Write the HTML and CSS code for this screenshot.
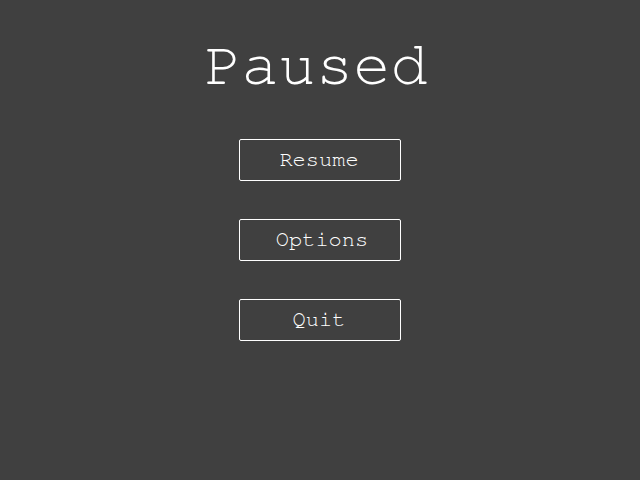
FILE: index.html
```html
<!DOCTYPE html>
<html>
<head>
<meta charset="utf-8">
<link rel="stylesheet" href="styles.css">
</head>
<body>
<main class="pause">
  <h1 class="title">Paused</h1>
  <div class="menu">
    <button class="btn">Resume</button>
    <button class="btn btn-wide">Options</button>
    <button class="btn">Quit</button>
  </div>
</main>
</body>
</html>
```
FILE: styles.css
```css
html, body {
  margin: 0;
  padding: 0;
  width: 640px;
  height: 480px;
  background: #404040;
  overflow: hidden;
}
.pause {
  display: flex;
  flex-direction: column;
  align-items: center;
  padding-top: 33px;
  font-family: "FreeMono", "Liberation Mono", monospace;
  color: #ffffff;
}
.title {
  margin: 0;
  font-size: 62px;
  font-weight: normal;
  line-height: 64px;
  height: 64px;
  margin-left: -8px;
}
.menu {
  display: flex;
  flex-direction: column;
  align-items: center;
  gap: 38px;
  margin-top: 42px;
}
.btn {
  box-sizing: border-box;
  width: 162px;
  height: 42px;
  border: 1px solid #ffffff;
  border-radius: 2px;
  background: transparent;
  color: #ffffff;
  font-family: "FreeMono", "Liberation Mono", monospace;
  font-size: 22px;
  padding: 0 2px 2px 0;
}
.btn-wide {
  padding: 0 0 2px 4px;
}
```
